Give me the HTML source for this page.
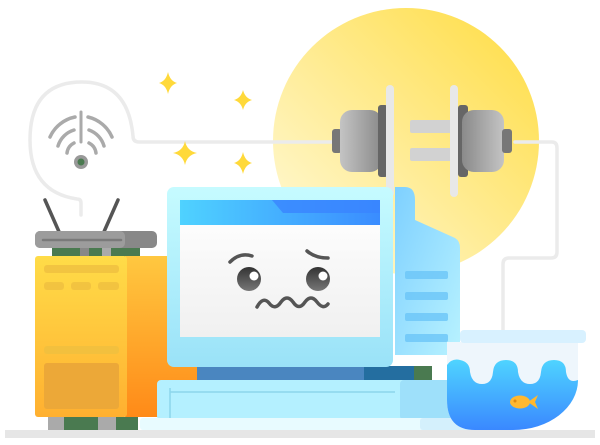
<!DOCTYPE html><html><head><meta charset="utf-8"><style>html,body{margin:0;padding:0;background:#fff}svg{display:block}</style></head><body>
<svg width="600" height="445" viewBox="0 0 600 445" xmlns="http://www.w3.org/2000/svg">
<defs>
<linearGradient id="sun" x1="0" y1="1" x2="1" y2="0"><stop offset="0" stop-color="#fffbe0"/><stop offset=".5" stop-color="#ffeb90"/><stop offset="1" stop-color="#ffdc40"/></linearGradient>
<linearGradient id="plug" x1="0" x2="1"><stop offset="0" stop-color="#c4c4c4"/><stop offset="1" stop-color="#8a8a8a"/></linearGradient>
<linearGradient id="plug2" x1="1" x2="0"><stop offset="0" stop-color="#c4c4c4"/><stop offset="1" stop-color="#8a8a8a"/></linearGradient>
<linearGradient id="tower" x1="0" y1="0" x2="0" y2="1"><stop offset="0" stop-color="#ffdc48"/><stop offset="1" stop-color="#ffb030"/></linearGradient>
<linearGradient id="side" x1="0" y1="0" x2="0" y2="1"><stop offset="0" stop-color="#ffc840"/><stop offset="1" stop-color="#ff8a18"/></linearGradient>
<linearGradient id="mon" x1="0" y1="0" x2="0" y2="1"><stop offset="0" stop-color="#c6fbff"/><stop offset="1" stop-color="#9ae2f8"/></linearGradient>
<linearGradient id="back" x1="0" y1="0" x2="1" y2="1"><stop offset="0" stop-color="#7ed0ff"/><stop offset="1" stop-color="#b8f2ff"/></linearGradient>
<linearGradient id="bar" x1="0" x2="1"><stop offset="0" stop-color="#4fd2ff"/><stop offset="1" stop-color="#3a8cff"/></linearGradient>
<linearGradient id="scr" x1="0" y1="0" x2="0" y2="1"><stop offset="0" stop-color="#fff"/><stop offset="1" stop-color="#f0f0f0"/></linearGradient>
<linearGradient id="water" x1="0" y1="0" x2="0" y2="1"><stop offset="0" stop-color="#4fd4ff"/><stop offset="1" stop-color="#3a88ff"/></linearGradient>
<linearGradient id="eye" x1="0" y1="0" x2="0" y2="1"><stop offset="0" stop-color="#333"/><stop offset="1" stop-color="#777"/></linearGradient>
</defs>
<circle cx="406" cy="141" r="133" fill="url(#sun)"/>
<g fill="none" stroke="#ebebeb" stroke-width="3.5" stroke-linecap="round">
<path d="M81 215 V203 Q81 199 77 199 Q30 192 30 140 Q30 82 82 82 Q128 82 133 136 Q133 142 139 142 H335"/>
<path d="M515 142 H552 Q557 142 557 148 V252 Q557 258 551 258 H509 Q503 258 503 264 V330"/>
</g>
<path d="M81 112v30" stroke="#aaa" stroke-width="3" stroke-linecap="round"/>
<g fill="none" stroke="#aaa" stroke-width="3.5" stroke-linecap="round">
<path d="M50 137 A35 35 0 0 1 75 117"/><path d="M58 146 A24 24 0 0 1 74 130"/><path d="M67 153 A13 13 0 0 1 74 143"/>
<path d="M112 137 A35 35 0 0 0 88 117"/><path d="M104 146 A24 24 0 0 0 89 130"/><path d="M96 153 A13 13 0 0 0 89 143"/>
</g>
<circle cx="81" cy="162" r="7" fill="#999"/><circle cx="81" cy="162" r="3.5" fill="#4a7a50"/>
<g fill="#ffd93a">
<path d="M168 72 Q170 81 177 83 Q170 85 168 94 Q166 85 159 83 Q166 81 168 72Z"/>
<path d="M243 90 Q245 98 252 100 Q245 102 243 110 Q241 102 234 100 Q241 98 243 90Z"/>
<path d="M185 141 Q187 151 197 153 Q187 155 185 165 Q183 155 173 153 Q183 151 185 141Z"/>
<path d="M243 152 Q245 161 252 163 Q245 165 243 174 Q241 165 234 163 Q241 161 243 152Z"/>
</g>
<rect x="332" y="129" width="10" height="24" rx="3" fill="#777"/>
<rect x="340" y="110" width="42" height="62" rx="12" fill="url(#plug)"/>
<rect x="378" y="105" width="10" height="72" rx="3" fill="#666"/>
<rect x="386" y="85" width="8" height="112" rx="4" fill="#e8e8e8"/>
<rect x="410" y="120" width="42" height="13" rx="2" fill="#d2d2d2"/>
<rect x="410" y="148" width="42" height="13" rx="2" fill="#d2d2d2"/>
<rect x="450" y="85" width="8" height="112" rx="4" fill="#e8e8e8"/>
<rect x="458" y="105" width="10" height="72" rx="3" fill="#666"/>
<rect x="462" y="110" width="42" height="62" rx="12" fill="url(#plug2)"/>
<rect x="502" y="129" width="10" height="24" rx="3" fill="#777"/>
<rect x="5" y="430" width="590" height="8" fill="#e6e6e6"/>
<path d="M45 200 L60 234 M118 200 L103 234" stroke="#555" stroke-width="3.5" stroke-linecap="round"/>
<rect x="35" y="231" width="122" height="17" rx="5" fill="#888"/>
<rect x="35" y="231" width="90" height="17" rx="5" fill="#9c9c9c"/>
<path d="M43 240h78" stroke="#7a7a7a" stroke-width="2.5" stroke-linecap="round"/>
<rect x="52" y="248" width="88" height="9" fill="#4a7a50"/>
<rect x="80" y="248" width="9" height="9" fill="#888"/><rect x="102" y="248" width="9" height="9" fill="#aaa"/>
<rect x="125" y="256" width="80" height="161" fill="url(#side)"/>
<rect x="35" y="256" width="92" height="161" rx="3" fill="url(#tower)"/>
<g fill="#f0c040" opacity=".8">
<rect x="44" y="265" width="75" height="8" rx="3"/><rect x="44" y="282" width="20" height="8" rx="3"/><rect x="71" y="282" width="20" height="8" rx="3"/><rect x="98" y="282" width="21" height="8" rx="3"/>
<rect x="44" y="346" width="75" height="8" rx="3"/></g>
<rect x="44" y="363" width="75" height="46" rx="3" fill="#eca838"/>
<rect x="48" y="417" width="90" height="13" fill="#4a7a50"/><rect x="48" y="417" width="16" height="13" fill="#aaa"/><rect x="98" y="417" width="18" height="13" fill="#aaa"/>
<path d="M395 187 H405 Q415 187 415 200 V220 L455 238 Q460 241 460 248 V355 H395Z" fill="url(#back)"/>
<g fill="#6cc6f8" opacity=".8"><rect x="405" y="271" width="43" height="8" rx="2"/><rect x="405" y="292" width="43" height="8" rx="2"/><rect x="405" y="313" width="43" height="8" rx="2"/><rect x="405" y="334" width="43" height="8" rx="2"/></g>
<rect x="197" y="366" width="235" height="16" fill="#4a86c0"/><rect x="364" y="366" width="50" height="16" fill="#246ea0"/><rect x="414" y="366" width="18" height="16" fill="#4a7a50"/>
<rect x="167" y="187" width="226" height="180" rx="7" fill="url(#mon)"/>
<rect x="180" y="200" width="200" height="137" fill="url(#scr)"/>
<rect x="180" y="200" width="200" height="25" fill="url(#bar)"/>
<path d="M248 200 H272 L283 213 H380 V200Z" fill="#3a84ff" opacity=".8"/>
<path d="M230 262 Q240 252 252 256" fill="none" stroke="#555" stroke-width="3.5" stroke-linecap="round"/>
<path d="M307 251 Q315 258 328 258" fill="none" stroke="#555" stroke-width="3.5" stroke-linecap="round"/>
<circle cx="249" cy="279" r="12" fill="url(#eye)"/><circle cx="254" cy="276" r="4.5" fill="#fff"/>
<circle cx="318" cy="279" r="12" fill="url(#eye)"/><circle cx="323" cy="276" r="4.5" fill="#fff"/>
<path d="M257 307 Q263 296 269 303 Q275 311 281 302 Q287 294 293 302 Q299 311 305 302 Q311 294 317 302 Q323 310 328 304" fill="none" stroke="#555" stroke-width="3.5" stroke-linecap="round"/>
<rect x="157" y="380" width="303" height="40" rx="4" fill="#b4f0ff"/>
<rect x="400" y="380" width="60" height="40" rx="4" fill="#9ee0fa"/>
<path d="M170 392 H395 M170 388 V418" stroke="#8cd6ec" stroke-width="1.5"/>
<rect x="140" y="418" width="337" height="12" rx="3" fill="#e8fbff"/>
<rect x="420" y="418" width="57" height="12" rx="3" fill="#d4f0fc"/>
<path d="M447 342 H578 V380 A65 50 0 0 1 513 430 H475 Q447 430 447 400Z" fill="#eef6fc"/>
<path d="M447 365 Q452 358 460 360 Q470 362 470 372 Q472 384 482 384 Q492 384 493 372 Q494 360 506 360 Q518 360 518 372 Q520 384 530 384 Q540 384 541 372 Q542 360 554 360 Q566 360 566 372 Q568 384 578 380 V380 A65 50 0 0 1 513 430 H475 Q447 430 447 400Z" fill="url(#water)"/>
<rect x="460" y="330" width="126" height="13" rx="4" fill="#d8f1ff"/>
<ellipse cx="520" cy="402" rx="10" ry="6.5" fill="#ffb830"/>
<path d="M528 402 L538 395 L535 402 L538 409Z" fill="#ffb830"/>
<circle cx="515" cy="401" r="1.5" fill="#e08a10"/>
</svg>
</body></html>
